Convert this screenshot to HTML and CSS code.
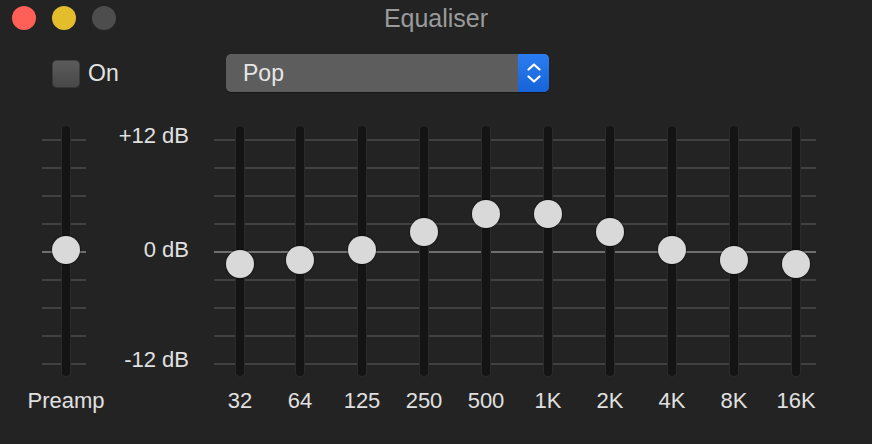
FILE: index.html
```html
<!DOCTYPE html>
<html>
<head>
<meta charset="utf-8">
<link rel="stylesheet" href="styles.css">
</head>
<body>
<div class="window">
  <header class="titlebar">
    <div class="lights">
      <span class="light red"></span>
      <span class="light yellow"></span>
      <span class="light gray"></span>
    </div>
    <div class="title">Equaliser</div>
    <div></div>
  </header>
  <div class="controls">
    <label class="toggle"><span class="checkbox"></span><span class="toggle-text">On</span></label>
    <div class="popup">
      <span class="popup-value">Pop</span>
      <span class="stepper">
        <svg width="14" height="24" viewBox="0 0 14 24"><path d="M1.5 8.5 L7 3.5 L12.5 8.5" fill="none" stroke="#fff" stroke-width="2.2" stroke-linecap="round" stroke-linejoin="round"/><path d="M1.5 15.5 L7 20.5 L12.5 15.5" fill="none" stroke="#fff" stroke-width="2.2" stroke-linecap="round" stroke-linejoin="round"/></svg>
      </span>
    </div>
  </div>
  <div class="eq">
    <div class="rails preamp">
      <div class="band"><div class="slider" style="--y:124px"><span class="track"></span><span class="knob"></span></div><div class="label">Preamp</div></div>
    </div>
    <div class="scale"><span>+12 dB</span><span class="mid">0 dB</span><span>-12 dB</span></div>
    <div class="rails bands">
      <div class="band"><div class="slider" style="--y:138px"><span class="track"></span><span class="knob"></span></div><div class="label">32</div></div>
      <div class="band"><div class="slider" style="--y:134px"><span class="track"></span><span class="knob"></span></div><div class="label">64</div></div>
      <div class="band"><div class="slider" style="--y:124px"><span class="track"></span><span class="knob"></span></div><div class="label">125</div></div>
      <div class="band"><div class="slider" style="--y:106px"><span class="track"></span><span class="knob"></span></div><div class="label">250</div></div>
      <div class="band"><div class="slider" style="--y:88px"><span class="track"></span><span class="knob"></span></div><div class="label">500</div></div>
      <div class="band"><div class="slider" style="--y:88px"><span class="track"></span><span class="knob"></span></div><div class="label">1K</div></div>
      <div class="band"><div class="slider" style="--y:106px"><span class="track"></span><span class="knob"></span></div><div class="label">2K</div></div>
      <div class="band"><div class="slider" style="--y:124px"><span class="track"></span><span class="knob"></span></div><div class="label">4K</div></div>
      <div class="band"><div class="slider" style="--y:134px"><span class="track"></span><span class="knob"></span></div><div class="label">8K</div></div>
      <div class="band"><div class="slider" style="--y:138px"><span class="track"></span><span class="knob"></span></div><div class="label">16K</div></div>
    </div>
  </div>
</div>
</body>
</html>
```
FILE: styles.css
```css
* { box-sizing: border-box; }
html, body { margin: 0; padding: 0; background: #232323; }
body { font-family: "Liberation Sans", Arial, sans-serif; color: #dedede; }

.window {
  width: 872px;
  height: 444px;
  background: #232323;
  display: flex;
  flex-direction: column;
  overflow: hidden;
}

.titlebar {
  height: 36px;
  display: grid;
  grid-template-columns: 1fr auto 1fr;
  align-items: center;
  padding: 0 12px;
}
.lights { display: flex; gap: 16px; }
.light { width: 24px; height: 24px; border-radius: 50%; display: block; }
.light.red { background: #fe5f57; }
.light.yellow { background: #e4bd2d; }
.light.gray { background: #4d4d4d; }
.title { font-size: 25px; color: #9a9a9a; line-height: 28px; }

.controls {
  margin-top: 18px;
  height: 38px;
  display: flex;
  align-items: center;
  padding-left: 52px;
}
.toggle { width: 174px; display: flex; align-items: center; }
.checkbox {
  width: 28px; height: 28px;
  border-radius: 5px;
  background: linear-gradient(#5c5c5c, #474747);
  box-shadow: inset 0 0 0 1px rgba(0,0,0,0.25);
  margin-top: 2px;
}
.toggle-text { margin-left: 8px; font-size: 23px; line-height: 26px; color: #e2e2e2; }

.popup {
  width: 323px;
  height: 38px;
  border-radius: 5px;
  background: #5d5d5d;
  display: flex;
  align-items: center;
  overflow: hidden;
  box-shadow: 0 1px 1px rgba(0,0,0,0.35);
}
.popup-value { flex: 1; padding-left: 17px; font-size: 23px; line-height: 26px; color: #e6e6e6; }
.stepper {
  width: 31px; height: 38px;
  background: linear-gradient(#2b7cf2, #1763d8);
  display: flex; align-items: center; justify-content: center;
}
.stepper svg { display: block; }

.eq {
  margin-top: 34px;
  display: flex;
  align-items: flex-start;
  padding-left: 42px;
}

.rails {
  display: flex;
  background-image:
    linear-gradient(to bottom, transparent 125px, #6e6e6e 125px, #6e6e6e 127px, transparent 127px),
    repeating-linear-gradient(to bottom, transparent 0, transparent 13px, #414141 13px, #414141 15px, transparent 15px, transparent 28px);
  background-size: 100% 250px;
  background-repeat: no-repeat;
}
.preamp { padding: 0 6px 0 10px; }
.bands { padding: 0 6px 0 12px; gap: 34px; }
.bands .band:first-child { margin-right: -2px; }

.band { width: 28px; display: flex; flex-direction: column; align-items: center; }
.slider { position: relative; width: 28px; height: 250px; display: flex; justify-content: center; }
.track {
  width: 8px; height: 250px;
  border-radius: 4px;
  background: #141414;
  box-shadow: 0 0 0 1px #2a2a2a;
}
.knob {
  position: absolute;
  left: 0;
  top: calc(var(--y) - 14px);
  width: 28px; height: 28px;
  border-radius: 50%;
  background: #d9d9d9;
  box-shadow: 0 0 1px 1px rgba(0,0,0,0.35);
}
.label { margin-top: 12px; font-size: 22px; line-height: 26px; white-space: nowrap; color: #e0e0e0; }

.scale {
  width: 103px;
  height: 250px;
  margin-top: -3px;
  margin-right: 25px;
  display: flex;
  flex-direction: column;
  justify-content: space-between;
  align-items: flex-end;
  font-size: 22px;
  line-height: 26px;
  color: #e0e0e0;
}
.scale .mid { margin-top: 4px; }
```
